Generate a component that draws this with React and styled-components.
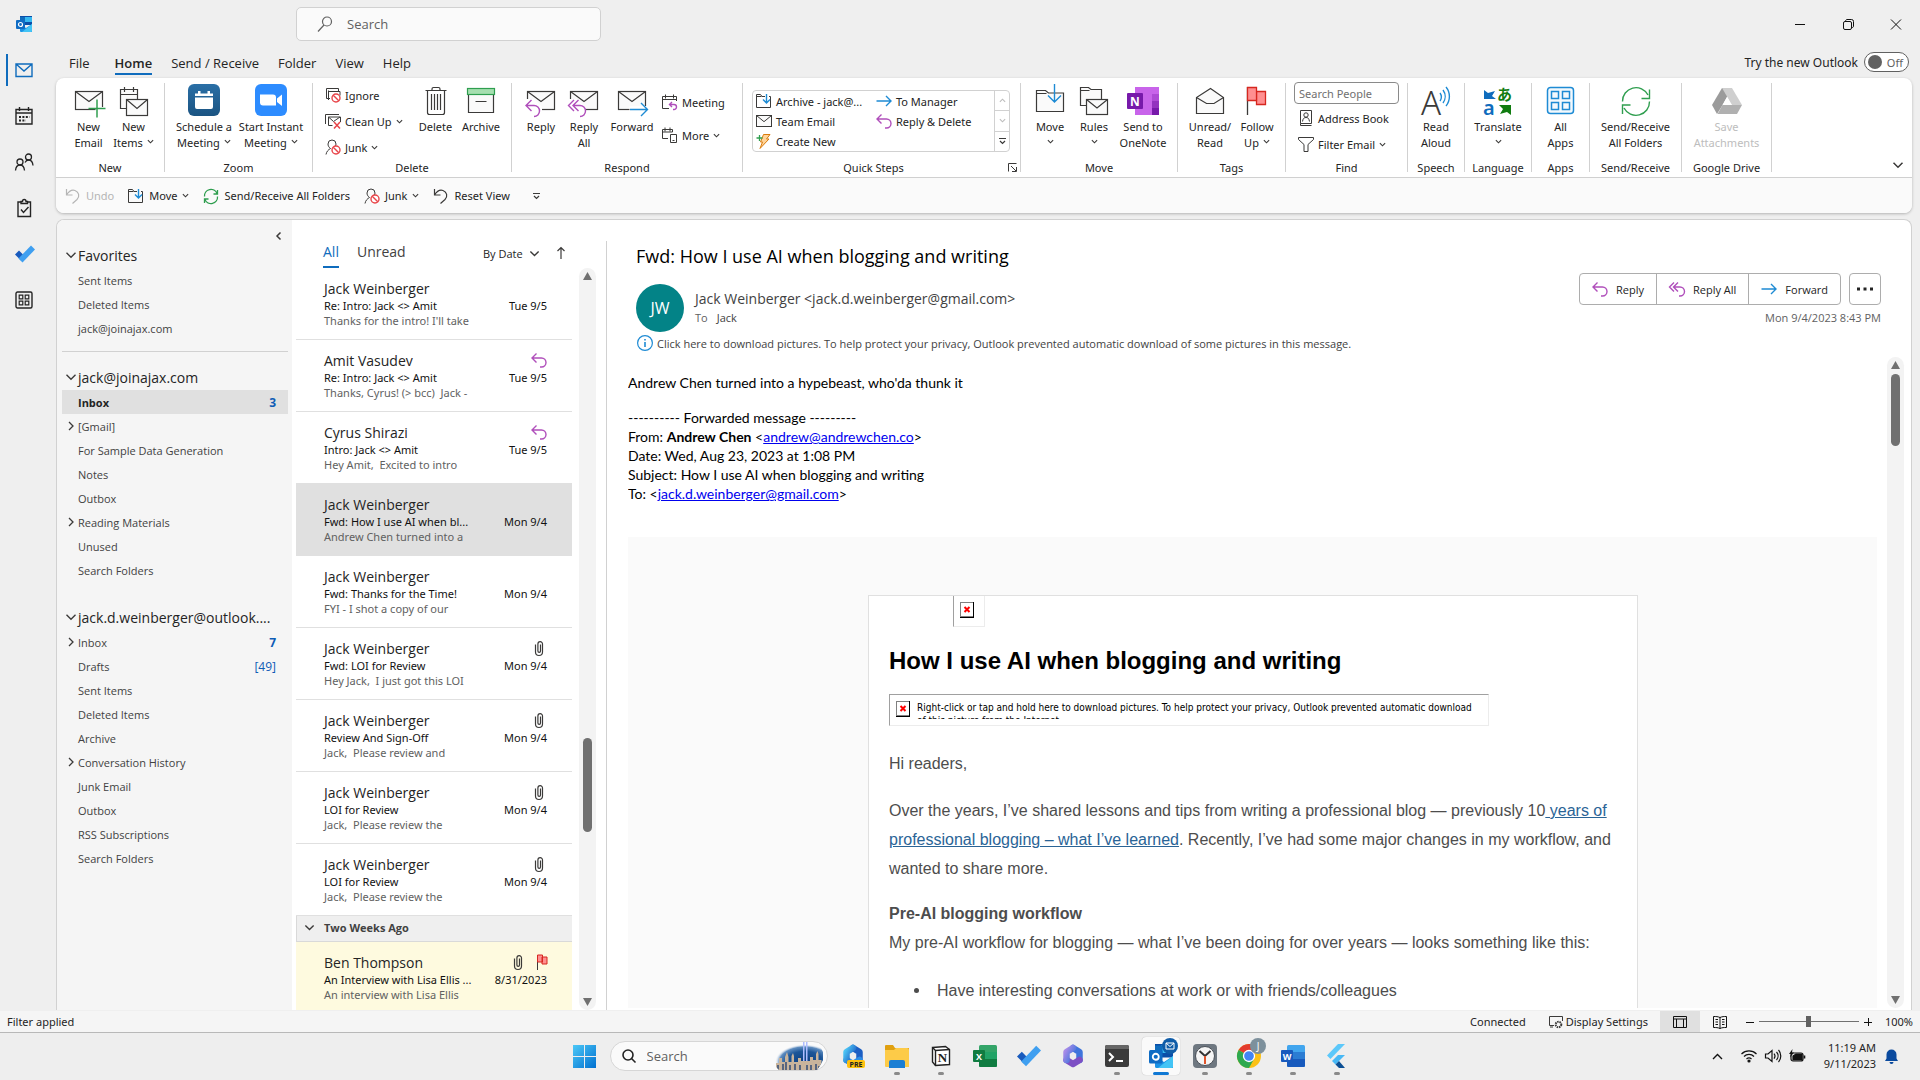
import React from "react";
import styled, { createGlobalStyle, css } from "styled-components";

const UI = '"Open Sans", "Noto Sans", sans-serif';
const RIB = '"Noto Sans", "Open Sans", sans-serif';
const INK = "#3b3a39";
const BLUE = "#1e8bd4";
const PURPLE = "#b04fbb";
const GREEN = "#2f9e4f";
const RED = "#e8454a";

const Global = createGlobalStyle`
  *, *::before, *::after { box-sizing: border-box; }
  body { margin: 0; font-family: ${UI}; font-size: 11px; color: #242424; background: #efefef; }
  button, input, select { font: inherit; color: inherit; }
  button { background: none; border: 0; padding: 0; cursor: default; }
  ul { list-style: none; margin: 0; padding: 0; }
  h1, h2, h3, p { margin: 0; }
  svg { display: block; flex: none; overflow: visible; }
`;

/* ---------- icons ---------- */

const Svg = ({ s = 16, w, h, vb, c = INK, sw = 1, children }) => (
  <svg
    width={w || s}
    height={h || s}
    viewBox={vb || `0 0 ${w || s} ${h || s}`}
    fill="none"
    stroke={c}
    strokeWidth={sw}
    aria-hidden="true"
  >
    {children}
  </svg>
);

const Chevron = ({ c = INK, s = 7, sw = 1.3 }) => (
  <Svg s={s} vb="0 0 8 8" c={c} sw={sw}><path d="M1 2.5 4 5.5 7 2.5" /></Svg>
);

const Mail = ({ x, y, w, h }) => (
  <g>
    <rect x={x} y={y} width={w} height={h} fill="#fafafa" />
    <path d={`M${x} ${y} L${x + w / 2} ${y + h * 0.56} L${x + w} ${y}`} />
  </g>
);

const Ban = ({ x, y, r = 4 }) => (
  <g stroke={RED} strokeWidth="1.4">
    <circle cx={x} cy={y} r={r} fill="#fff" />
    <path d={`M${x - r * 0.7} ${y - r * 0.7} L${x + r * 0.7} ${y + r * 0.7}`} />
  </g>
);

const BackArrow = () => (
  <path stroke={PURPLE} strokeWidth="1.4" d="M6.5 16 L1 21.5 L6.5 27 M1 21.5 H9 a5.5 5.5 0 0 1 0 11" />
);

const big = {
  newMail: <Svg s={32} sw={1.2}><Mail x={2.5} y={7.5} w={27} h={18} /><path d="M22.500 15h9v14h-9z" fill="#fff" stroke="none" /><path d="M24 15.5v18M15.500 24.500h17" stroke={GREEN} strokeWidth="1.5" /><path d="M29.500 15v8" /></Svg>,
  newItems: (
    <Svg s={32} sw={1.2}>
      <path d="M2.5 5.500h17v19h-17zM2.500 10.500h17M6.500 3v5M15.500 3v5" fill="#fafafa" />
      <Mail x={8.5} y={15.5} w={21} h={16} />
    </Svg>
  ),
  schedule: (
    <Svg s={32} c="none">
      <defs><linearGradient id="sch" x2="0" y2="1"><stop stopColor="#2a6fa6" /><stop offset="1" stopColor="#1b5482" /></linearGradient></defs>
      <rect width="32" height="32" rx="6" fill="url(#sch)" />
      <path fill="#fff" d="M7 12V9.500h3V7h2.500v2.500h7V7H22v2.500h3V12zM7 13.500h18V23a2 2 0 0 1-2 2H9a2 2 0 0 1-2-2z" />
    </Svg>
  ),
  instant: (
    <Svg s={32} c="none">
      <rect width="32" height="32" rx="6" fill="#2d8cff" />
      <path fill="#fff" d="M5 10.500h13a3 3 0 0 1 3 3v8H8a3 3 0 0 1-3-3zM22 14.500l5-4v11.500l-5-4z" />
    </Svg>
  ),
  trash: (
    <Svg s={32} sw={1.2}>
      <path d="M5.500 6.500h21M12 6.500V5a1.500 1.500 0 0 1 1.500-1.500h5A1.500 1.500 0 0 1 20 5v1.500M7.500 6.500v22a2 2 0 0 0 2 2h13a2 2 0 0 0 2-2v-22" />
      <path d="M11.500 10v16M14.500 10v16M17.500 10v16M20.500 10v16" />
    </Svg>
  ),
  archive: (
    <Svg s={32} sw={1.2}>
      <path d="M3.500 10.500h25v18h-25z" fill="#fafafa" />
      <rect x="2.500" y="4.500" width="27" height="6" fill="#a6dfb0" stroke={GREEN} />
      <path d="M10.500 17.500h11" />
    </Svg>
  ),
  reply: <Svg s={32} sw={1.2}><Mail x={2.5} y={7.5} w={27} h={18} /><path d="M0 15h9l8 8v11H0z" fill="#fff" stroke="none" /><BackArrow /></Svg>,
  replyAll: (
    <Svg s={32} sw={1.2}>
      <Mail x={2.5} y={7.5} w={27} h={18} /><path d="M0 15h9l8 8v11H0z" fill="#fff" stroke="none" />
      <path stroke={PURPLE} strokeWidth="1.4" d="M6 16 L.5 21.500 L6 27 M10.500 16 L5 21.500 L10.500 27 M5 21.500 H12 a5.500 5.500 0 0 1 0 11" />
    </Svg>
  ),
  forward: <Svg s={32} sw={1.2}><Mail x={2.5} y={7.5} w={27} h={18} /><path d="M13.500 22h20v5h-20z" fill="#fff" stroke="none" /><path d="M14 25.500h17.500M25 19l6.500 6.500L25 32" stroke={BLUE} strokeWidth="1.4" /></Svg>,
  move: (
    <Svg s={32} sw={1.2}>
      <path d="M2.500 27.500v-21h9l3 2.500h15v18.500zM2.500 9.500h10" fill="#fafafa" />
      <path d="M20.500 0v18M14 11.500l6.500 6.500 6.500-6.500" stroke={BLUE} strokeWidth="1.400" />
    </Svg>
  ),
  rules: (
    <Svg s={32} sw={1.2}>
      <path d="M2.500 21.500v-18h8l2.500 2h10.500v16zM2.500 6.500h9" fill="#fafafa" />
      <Mail x={8.5} y={15.5} w={21} h={15} />
    </Svg>
  ),
  onenote: (
    <Svg s={32} c="none">
      <rect x="8" y="3" width="24" height="28" fill="#c864ea" />
      <rect x="25" y="10" width="7" height="7" fill="#ae4bd5" /><rect x="25" y="17" width="7" height="7" fill="#9332bf" /><rect x="25" y="24" width="7" height="7" fill="#7719aa" />
      <rect x="0" y="9" width="16" height="16" rx="1" fill="#7719aa" />
      <text x="8" y="21.500" textAnchor="middle" fontSize="12" fontWeight="700" fill="#fff">N</text>
    </Svg>
  ),
  unread: <Svg s={32} sw={1.2}><path d="M2.500 29.500v-16L16.500 4.500l13 9v16z" fill="#fafafa" /><path d="M2.500 13.500l10 6h7.500l9.500-6" /></Svg>,
  flag: (
    <Svg s={32} sw={1.300}>
      <path d="M6.500 3v28" />
      <path d="M15.500 7.500h9v13h-9z" fill="#ff8f90" stroke="#d6271f" /><path d="M6.500 3.500h9v13h-9z" fill="#ff8f90" stroke="#d6271f" />
    </Svg>
  ),
  aloud: (
    <Svg s={32} sw={1.400} c={BLUE}>
      <text x="1" y="31" fontSize="33" fontWeight="300" fill={INK} stroke="none">A</text>
      <path d="M20 9a7 7 0 0 1 0 8M23 6a11 11 0 0 1 0 13M26 3a15 15 0 0 1 0 19" />
    </Svg>
  ),
  translate: (
    <Svg s={32} c="none">
      <path fill="#0f6cbd" d="M2 6l4 3 7-2-3 5 4 3H2z" />
      <path fill="#107c10" d="M29 31l-4-3-7 2 3-5-4-4h12z" />
      <text x="15" y="16" fontSize="15" fontWeight="700" fill="#107c10" fontFamily='"Noto Sans CJK JP"'>あ</text>
      <text x="1" y="31" fontSize="20" fontWeight="600" fill="#0f6cbd">a</text>
    </Svg>
  ),
  apps: (
    <Svg s={32} c={BLUE} sw={1.500}>
      <rect x="2.500" y="3.500" width="26" height="26" rx="3" fill="#f3f9fd" />
      <path d="M6.500 7.500h7v7h-7zM17.500 7.500h7v7h-7zM6.500 18.500h7v7h-7zM17.500 18.500h7v7h-7z" />
    </Svg>
  ),
  sync: (
    <Svg s={32} c={GREEN} sw={1.400}>
      <path d="M2.500 17.500A13.500 13.500 0 0 1 28 11M29.500 5.500v9h-8M29.500 17.500A13.500 13.500 0 0 1 4 24M2.500 30v-9h8" />
    </Svg>
  ),
  drive: (
    <Svg s={32} c="none">
      <path fill="#9b9b9b" d="M11 4h10l-5 9-5 9-5 8-5-9z" /><path fill="#cfcfcf" d="M11 4h10l10 17H21z" /><path fill="#b0b0b0" d="M6.500 30l5-9H31l-5 9z" /><path fill="#fff" d="M16 13l4.500 8h-9z" />
    </Svg>
  ),
};

const sm = {
  ignore: <Svg s={16}><path d="M13.500 5V1.500h-12v10H5M4 4.500h11v4M3.500 13V3.500" /><Ban x={11} y={11} r={4} /></Svg>,
  cleanup: <Svg s={16}><path d="M14 1.500H.5V11M3.500 12.500v-8.500h12v5M3.500 4l5 4.500L15 4M3.500 12.500h4" /><path d="M9 9l6 6.500M15 9l-6 6.500" stroke={RED} strokeWidth="1.500" /></Svg>,
  junk: <Svg s={16}><path d="M1 15.500c.5-3 2.500-5 4.500-6C3.500 8 3 6.500 3 5a4 4 0 0 1 8 0c0 .8-.3 1.500-.6 2" /><Ban x={11} y={11} r={4} /></Svg>,
  meeting: <Svg s={16}><path d="M7 14.500H.5v-12h14V7M.5 5.500h14M3.500.500v4M11.500.500v4" /><path d="M10 8l-2.500 2.500L10 13M7.500 10.500h4.500a2.500 2.500 0 0 1 0 5h-1" stroke={PURPLE} strokeWidth="1.400" /></Svg>,
  more: <Svg s={16}><path d="M6 11.500H.5v-9h10V5M.5 5h10M3 .500v4M8 .500v4M8.500 7.500h6v8h-6zM10.500 13.500h2" /></Svg>,
  move: <Svg s={16}><path d="M6 14.500H.5v-13h4l1.500 2h3M.5 3.500h5M13 3.500h1.500v11H6" /><path d="M10.500 1v9M7 6.500l3.500 3.500L14 6.500" stroke={BLUE} strokeWidth="1.400" /></Svg>,
  mail: <Svg s={16}><Mail x={0.5} y={2.5} w={15} h={11} /></Svg>,
  bolt: <Svg s={16} c="#d97b0c"><path d="M7.500 1.500H14L10.500 6H13L4 15.500 6.500 9H4.500z" fill="#ffd49a" /><path d="M.5 5h6M3.500 2v6" stroke={GREEN} strokeWidth="1.300" /></Svg>,
  right: <Svg s={16} c={BLUE} sw={1.400}><path d="M.5 8h14M10 3l5 5-5 5" /></Svg>,
  reply: <Svg s={16} c={PURPLE} sw={1.400}><path d="M5.500 1.500L1 6l4.500 4.500M1 6h9.500a4.500 4.500 0 0 1 0 9H9" /></Svg>,
  replyAll: <Svg s={16} c={PURPLE} sw={1.400}><path d="M5 1.500L.5 6 5 10.500M9 1.500L4.500 6 9 10.500M4.500 6H11a4.500 4.500 0 0 1 0 9h-1" /></Svg>,
  book: <Svg s={16}><path d="M2.500.500h11v13h-11zM2.500 13.500v2h11" /><circle cx="8" cy="5" r="2.200" /><path d="M4.500 11.500c.5-3 1.500-4 3.500-4s3 1 3.500 4" /></Svg>,
  filter: <Svg s={16}><path d="M.500 1.500h15v2l-5.500 5v7h-4v-7l-5.500-5z" /></Svg>,
  sync: <Svg s={16} c={GREEN} sw={1.300}><path d="M1.500 8.500A6.500 6.500 0 0 1 14 5.500M14.500 2v4h-4M14.500 8.500A6.500 6.500 0 0 1 2 11.500M1.500 15v-4h4" /></Svg>,
  undo: <Svg s={16} sw={1.200}><path d="M1.500 1v6h6M1.500 7C4 3 7 1.500 10 2.500c4 1.500 5 6 2 9L7.500 15.500" /></Svg>,
  undoOff: <Svg s={16} sw={1.200} c="#b5b5b5"><path d="M1.500 1v6h6M1.500 7C4 3 7 1.500 10 2.500c4 1.500 5 6 2 9L7.500 15.500" /></Svg>,
  clip: <Svg w={8} h={16} sw={1.200}><path d="M5.500 4.500v6.500a1.300 1.300 0 0 1-2.600 0V4a2.200 2.200 0 0 1 4.600 0v8a3.500 3.500 0 0 1-7 0V4.500" /></Svg>,
  flag: <Svg w={11} h={16}><path d="M1.500 1v15" /><path d="M6 3h5v7H6zM1.500 1h5v7h-5z" fill="#ff8f90" stroke="#d6271f" /></Svg>,
  customize: <Svg s={8} sw={1.200}><path d="M1 1.500h7M2 4l2.500 2.500L7 4" /></Svg>,
  info: <Svg s={16} c={BLUE} sw={1.200}><circle cx="8" cy="8" r="7.400" /><path d="M8 7v5M8 4v1.600" strokeWidth="1.600" /></Svg>,
  up: <Svg s={14} sw={1.200}><path d="M7 13V1.500M3.500 5L7 1.500 10.500 5" /></Svg>,
};

const OutlookLogo = ({ s = 16 }) => (
  <Svg s={s} vb="0 0 16 16" c="none">
    <rect x="4" y="0" width="12" height="9" fill="#0a4ea8" /><rect x="8" y="1" width="8" height="5" fill="#35b8f1" /><rect x="4" y="1" width="5" height="5" fill="#0f6cbd" />
    <path d="M4 8l6 4 6-4v8H5a1 1 0 0 1-1-1z" fill="#1a93e6" /><path d="M16 8v7a1 1 0 0 1-1 1H6z" fill="#43c4f5" />
    <rect x="0" y="4" width="9" height="9" rx="1" fill="#0f6cc4" />
    <circle cx="4.500" cy="8.500" r="2" stroke="#fff" strokeWidth="1.200" />
  </Svg>
);

const TodoLogo = ({ s = 20 }) => (
  <Svg s={s} vb="0 0 20 20" c="none">
    <path d="M0 10.500L4 6.500l6 6-4 4z" fill="#185abd" /><path d="M3.500 14.500L16 1.500 20 5.500 7.500 18.500z" fill="#3f9ff0" />
  </Svg>
);

const rail = [
  ["Mail", <Svg w={18} h={18} c="#0f6cbd" sw={1.400}><path d="M1 3h16v12.500H1zM1 3l8 7 8-7" /></Svg>],
  ["Calendar", <Svg s={18} sw={1.400} c="#242424"><path d="M1 2.500h16v14.500H1zM1 6h16M4.500 0v4M13.500 0v4" /><path d="M4 10h10.500M4 13.500h7" strokeWidth="2" strokeDasharray="2 1.400" /></Svg>],
  ["People", <Svg s={18} sw={1.300} c="#242424"><circle cx="5" cy="9" r="3" /><path d="M0.500 17.500c.3-3.500 2-5.500 4.500-5.500s4.200 2 4.500 5.500" /><circle cx="13.500" cy="4" r="3" /><path d="M10 9.500c.8-1.500 2-2.500 3.500-2.500 2.500 0 4.200 2 4.500 5.500" /></Svg>],
  ["Tasks", <Svg s={18} sw={1.400} c="#242424"><path d="M5.500 3H3v14.500h12.500V3H13M6 4.500V2.500h1.500C7.500 1 8 .500 9.200.500S11 1 11 2.500h1.500v2z" /><path d="M6 10.500l2.500 3 5-5.500" /></Svg>],
  ["To Do", <TodoLogo />],
  ["More apps", <Svg s={18} sw={1.400} c="#242424"><rect x="1" y="1" width="16" height="16" rx="1.500" /><path d="M4.200 4.200h3.600v3.600H4.200zM10.200 4.200h3.600v3.600h-3.600zM4.200 10.200h3.600v3.600H4.200zM10.200 10.200h3.600v3.600h-3.600z" strokeWidth="1.200" /></Svg>],
];

/* ---------- frame ---------- */

const Screen = styled.div`
  height: 100vh;
  display: flex;
  flex-direction: column;
  background: #efefef;
  overflow: hidden;
`;
const Window = styled.div`
  flex: 1;
  min-height: 0;
  display: flex;
`;
const Rail = styled.nav`
  width: 56px;
  flex: none;
  display: flex;
  flex-direction: column;
  align-items: flex-start;
`;
const RailLogo = styled.div`
  height: 47px;
  padding: 16px 0 0 16px;
`;
const RailButton = styled.button`
  width: 42px;
  height: 32px;
  margin: 7px 0 7px 6px;
  padding-left: 7px;
  display: flex;
  align-items: center;
  border-left: 2px solid ${(p) => (p.$on ? "#0f6cbd" : "transparent")};
`;
const Column = styled.div`
  flex: 1;
  min-width: 0;
  display: flex;
  flex-direction: column;
  padding-right: 8px;
`;
const TitleBar = styled.header`
  height: 48px;
  display: flex;
  justify-content: space-between;
  padding: 7px 0 0 240px;
`;
const SearchBox = styled.label`
  width: 305px;
  height: 34px;
  display: flex;
  align-items: center;
  gap: 14px;
  padding: 0 20px;
  border: 1px solid #d1d1d1;
  border-radius: 5px;
  background: #fafafa;
`;
const PlainInput = styled.input`
  flex: 1;
  min-width: 0;
  border: 0;
  padding: 0;
  background: none;
  outline: none;
  font-size: ${(p) => p.$size || 13}px;
  &::placeholder { color: #616161; opacity: 1; }
`;
const WinControls = styled.div`
  display: flex;
  align-items: flex-start;
  gap: 36px;
  padding: 11px 10px 0 0;
`;
const TabRow = styled.div`
  height: 30px;
  display: flex;
  justify-content: space-between;
  padding: 4px 3px 0 13px;
`;
const Tabs = styled.nav`
  display: flex;
  gap: 19px;
`;
const Tab = styled.button`
  height: 23px;
  font-size: 13px;
  line-height: 22px;
  font-weight: ${(p) => (p.$on ? 600 : 400)};
  border-bottom: 2px solid ${(p) => (p.$on ? "#0f6cbd" : "transparent")};
  &:first-child { margin-right: 6px; }
`;
const TryNew = styled.label`
  height: 20px;
  display: flex;
  align-items: center;
  gap: 6px;
  font-size: 12px;
  font-family: ${RIB};
`;
const Toggle = styled.span`
  width: 45px;
  height: 20px;
  display: flex;
  align-items: center;
  justify-content: space-between;
  padding: 0 5px 0 3px;
  border: 1px solid #616161;
  border-radius: 10px;
  background: #fff;
  font-size: 11px;
  color: #616161;
  input {
    appearance: none;
    width: 14px;
    height: 14px;
    margin: 0;
    border-radius: 7px;
    background: #616161;
  }
`;

/* ---------- ribbon ---------- */

const Ribbon = styled.section`
  border-radius: 8px;
  background: #fff;
  box-shadow: 0 1px 3px rgba(0, 0, 0, 0.25);
  font-family: ${RIB};
  overflow: hidden;
  flex: none;
`;
const Groups = styled.div`
  display: flex;
  height: 100px;
  padding-top: 4px;
  border-bottom: 1px solid #d0d0d0;
`;
const GroupBox = styled.div`
  width: ${(p) => p.$w}px;
  flex: none;
  display: flex;
  flex-direction: column;
  position: relative;
`;
const GroupBody = styled.div`
  height: 78px;
  display: flex;
  padding-left: ${(p) => p.$pad || 0}px;
  justify-content: ${(p) => (p.$pad ? "flex-start" : "center")};
`;
const GroupLabel = styled.div`
  line-height: 16px;
  font-size: 11px;
  text-align: center;
  padding-right: ${(p) => (p.$launcher ? 16 : 0)}px;
`;
const Divider = styled.span`
  width: 1px;
  height: 89px;
  margin-top: 1px;
  flex: none;
  background: #d1d1d1;
`;
const Launcher = styled.button`
  position: absolute;
  right: 3px;
  bottom: 5px;
`;
const BigBtn = styled.button`
  width: ${(p) => p.$w}px;
  display: flex;
  flex-direction: column;
  align-items: center;
  padding-top: 2px;
  line-height: 16px;
  white-space: nowrap;
  color: ${(p) => (p.disabled ? "#bdbdbd" : "#242424")};
  svg:first-child { margin-bottom: 3px; }
`;
const Line = styled.span`
  height: 16px;
  display: flex;
  align-items: center;
  gap: 4px;
`;
const SmallCol = styled.div`
  width: ${(p) => p.$w}px;
  display: flex;
  flex-direction: column;
  gap: ${(p) => p.$gap || 0}px;
  padding-top: ${(p) => p.$gap || 0}px;
`;
const SmallBtn = styled.button`
  height: 26px;
  display: flex;
  align-items: center;
  gap: 4px;
  padding-left: 4px;
  white-space: nowrap;
`;
const PeopleInput = styled.input`
  width: 105px;
  height: 22px;
  margin-bottom: 1px;
  padding: 0 4px;
  border: 1px solid #8a8a8a;
  border-radius: 4px;
  background: #fff;
  &::placeholder { color: #707070; opacity: 1; }
`;
const Steps = styled.div`
  width: 258px;
  height: 62px;
  margin-top: 8px;
  display: grid;
  grid-template-columns: 120px 1fr 15px;
  border: 1px solid #d1d1d1;
  border-radius: 4px;
`;
const StepCol = styled.div`
  display: flex;
  flex-direction: column;
  button { height: 20px; gap: 4px; padding-left: 3px; }
`;
const StepScroll = styled.div`
  display: flex;
  flex-direction: column;
  border-left: 1px solid #d1d1d1;
  button {
    flex: 1;
    display: flex;
    align-items: center;
    justify-content: center;
  }
  button + button { border-top: 1px solid #d1d1d1; }
`;
const Collapse = styled.button`
  margin: auto 8px 6px auto;
`;
const Quick = styled.div`
  height: 35px;
  display: flex;
  align-items: center;
  gap: 14px;
  padding: 0 9px;
  background: #fafafa;
`;
const QuickBtn = styled.button`
  display: flex;
  align-items: center;
  gap: 5px;
  white-space: nowrap;
  color: ${(p) => (p.disabled ? "#b5b5b5" : "#242424")};
  &:last-child { margin-left: 8px; }
`;

const Big = ({ icon, a, b, w, drop, disabled }) => (
  <BigBtn $w={w} disabled={disabled}>
    {big[icon]}
    <Line>{a}</Line>
    {(b || drop) && <Line>{b}{drop && <Chevron />}</Line>}
  </BigBtn>
);
const Small = ({ icon, children, drop }) => (
  <SmallBtn>{sm[icon]}{children}{drop && <Chevron />}</SmallBtn>
);
const Group = ({ label, w, pad, children, launcher }) => (
  <>
    <GroupBox $w={w}>
      <GroupBody $pad={pad}>{children}</GroupBody>
      <GroupLabel $launcher={launcher}>{label}</GroupLabel>
      {launcher && (
        <Launcher aria-label="Manage quick steps">
          <Svg s={9}><path d="M8.500.500h-8v8M3 3l5 5M8.500 4v4.500H4" /></Svg>
        </Launcher>
      )}
    </GroupBox>
    <Divider />
  </>
);

const RibbonBar = () => (
  <Ribbon>
    <Groups>
      <Group label="New" w={108} pad={10}>
        <Big icon="newMail" a="New" b="Email" w={45} />
        <Big icon="newItems" a="New" b="Items" w={45} drop />
      </Group>
      <Group label="Zoom" w={147} pad={5}>
        <Big icon="schedule" a="Schedule a" b="Meeting" w={68} drop />
        <Big icon="instant" a="Start Instant" b="Meeting" w={66} drop />
      </Group>
      <Group label="Delete" w={198} pad={8}>
        <SmallCol $w={94}>
          <Small icon="ignore">Ignore</Small>
          <Small icon="cleanup" drop>Clean Up</Small>
          <Small icon="junk" drop>Junk</Small>
        </SmallCol>
        <Big icon="trash" a="Delete" w={41} />
        <Big icon="archive" a="Archive" w={50} />
      </Group>
      <Group label="Respond" w={230} pad={8}>
        <Big icon="reply" a="Reply" w={42} />
        <Big icon="replyAll" a="Reply" b="All" w={44} />
        <Big icon="forward" a="Forward" w={52} />
        <SmallCol $w={80} $gap={7}>
          <Small icon="meeting">Meeting</Small>
          <Small icon="more" drop>More</Small>
        </SmallCol>
      </Group>
      <Group label="Quick Steps" w={277} pad={9} launcher>
        <Steps>
          <StepCol>
            <Small icon="move">Archive - jack@...</Small>
            <Small icon="mail">Team Email</Small>
            <Small icon="bolt">Create New</Small>
          </StepCol>
          <StepCol>
            <Small icon="right">To Manager</Small>
            <Small icon="reply">Reply &amp; Delete</Small>
          </StepCol>
          <StepScroll>
            <button aria-label="Previous steps"><Svg s={7} vb="0 0 8 8" c="#bdbdbd" sw={1.300}><path d="M1 5.500 4 2.500 7 5.500" /></Svg></button>
            <button aria-label="Next steps"><Chevron c="#bdbdbd" /></button>
            <button aria-label="All steps">{sm.customize}</button>
          </StepScroll>
        </Steps>
      </Group>
      <Group label="Move" w={156} pad={6}>
        <Big icon="move" a="Move" w={46} drop />
        <Big icon="rules" a="Rules" w={42} drop />
        <Big icon="onenote" a="Send to" b="OneNote" w={56} />
      </Group>
      <Group label="Tags" w={107} pad={6}>
        <Big icon="unread" a="Unread/" b="Read" w={52} />
        <Big icon="flag" a="Follow" b="Up" w={42} drop />
      </Group>
      <Group label="Find" w={121} pad={8}>
        <SmallCol $w={105}>
          <PeopleInput aria-label="Search People" placeholder="Search People" />
          <Small icon="book">Address Book</Small>
          <Small icon="filter" drop>Filter Email</Small>
        </SmallCol>
      </Group>
      <Group label="Speech" w={56}><Big icon="aloud" a="Read" b="Aloud" w={50} /></Group>
      <Group label="Language" w={66}><Big icon="translate" a="Translate" w={60} drop /></Group>
      <Group label="Apps" w={57}><Big icon="apps" a="All" b="Apps" w={50} /></Group>
      <Group label="Send/Receive" w={91}><Big icon="sync" a="Send/Receive" b="All Folders" w={85} /></Group>
      <Group label="Google Drive" w={89}><Big icon="drive" a="Save" b="Attachments" w={80} disabled /></Group>
      <Collapse aria-label="Collapse ribbon"><Chevron s={12} sw={1} /></Collapse>
    </Groups>
    <Quick>
      <QuickBtn disabled>{sm.undoOff}Undo</QuickBtn>
      <QuickBtn>{sm.move}Move<Chevron /></QuickBtn>
      <QuickBtn>{sm.sync}Send/Receive All Folders</QuickBtn>
      <QuickBtn>{sm.junk}Junk<Chevron /></QuickBtn>
      <QuickBtn>{sm.undo}Reset View</QuickBtn>
      <QuickBtn aria-label="Customize toolbar">{sm.customize}</QuickBtn>
    </Quick>
  </Ribbon>
);

/* ---------- folders ---------- */

const Panel = styled.main`
  flex: 1;
  min-height: 0;
  margin-top: 6px;
  display: flex;
  border: 1px solid #d1d1d1;
  border-bottom: 0;
  border-radius: 8px 8px 0 0;
  background: #fff;
  overflow: hidden;
`;
const Folders = styled.nav`
  width: 235px;
  flex: none;
  padding: 0 4px 0 5px;
  background: #f5f5f5;
`;
const PaneTop = styled.div`
  height: 22px;
  display: flex;
  justify-content: flex-end;
  padding: 9px 5px 0 0;
`;
const Account = styled.button`
  width: 100%;
  height: 26px;
  display: flex;
  align-items: center;
  gap: 1px;
  padding-left: 3px;
  font-size: 14px;
  white-space: nowrap;
`;
const Rule = styled.hr`
  height: 1px;
  border: 0;
  margin: 11px 0 12px;
  background: #d1d1d1;
`;
const Gap = styled.div`
  height: 22px;
`;
const Folder = styled.button`
  width: 100%;
  height: 24px;
  display: grid;
  grid-template-columns: 11px 1fr auto;
  align-items: center;
  padding: 0 12px 0 5px;
  text-align: left;
  font-size: 11px;
  color: #424242;
  background: ${(p) => (p.$on ? "#e0e0e0" : "none")};
  ${(p) => p.$on && css`font-weight: 700; color: #242424;`}
`;
const Count = styled.span`
  font-size: 12px;
  color: #0f5cb5;
  font-weight: ${(p) => (p.$strong ? 700 : 400)};
`;

const first = [["Inbox", "3", true], ["[Gmail]", null, false, true], ["For Sample Data Generation"], ["Notes"], ["Outbox"], ["Reading Materials", null, false, true], ["Unused"], ["Search Folders"]];
const second = [["Inbox", "7", false, true], ["Drafts", "[49]"], ["Sent Items"], ["Deleted Items"], ["Archive"], ["Conversation History", null, false, true], ["Junk Email"], ["Outbox"], ["RSS Subscriptions"], ["Search Folders"]];

const FolderList = ({ items }) => (
  <ul>
    {items.map(([name, count, on, nested]) => (
      <li key={name}>
        <Folder $on={on}>
          {nested ? <Svg s={8} sw={1.300}><path d="M2 0l4 4-4 4" /></Svg> : <span />}
          <span>{name}</span>
          {count && <Count $strong={count.length === 1}>{count}</Count>}
        </Folder>
      </li>
    ))}
  </ul>
);
const Head = ({ children }) => <Account><Chevron s={12} sw={0.9} />{children}</Account>;

/* ---------- message list ---------- */

const ListPane = styled.section`
  width: 314px;
  flex: none;
  display: flex;
  flex-direction: column;
  padding: 0 10px 0 4px;
`;
const ListHead = styled.div`
  height: 48px;
  padding: 20px 28px 0 27px;
  display: flex;
`;
const FilterTab = styled.button`
  height: 28px;
  margin-right: 18px;
  padding-bottom: 4px;
  font-size: 14px;
  color: ${(p) => (p.$on ? "#0f6cbd" : "#424242")};
  border-bottom: 2px solid ${(p) => (p.$on ? "#0f6cbd" : "transparent")};
`;
const SortBy = styled.label`
  height: 26px;
  margin-left: auto;
  margin-right: 14px;
  display: flex;
  align-items: center;
  gap: 6px;
  select {
    appearance: none;
    border: 0;
    padding: 0;
    background: none;
    outline: none;
  }
`;
const SortDir = styled.button`
  height: 26px;
`;
const ListBody = styled.div`
  flex: 1;
  min-height: 0;
  display: flex;
  justify-content: space-between;
`;
const Rows = styled.ul`
  width: 276px;
  overflow: hidden;
`;
const Row = styled.li`
  height: 72px;
  padding: 10px 25px 0 28px;
  display: grid;
  grid-template-columns: 1fr auto;
  grid-template-rows: 20px 14px 16px;
  align-items: center;
  border-bottom: 1px solid #e0e0e0;
  background: ${(p) => (p.$tone === "selected" ? "#e0e0e0" : p.$tone === "flagged" ? "#fefadf" : "#fff")};
  white-space: nowrap;
`;
const From = styled.span`
  font-size: 14px;
`;
const Marks = styled.span`
  display: flex;
  gap: 14px;
  justify-content: flex-end;
  padding-right: ${(p) => (p.$inset ? 4 : 0)}px;
`;
const Subject = styled.span`
  font-family: ${RIB};
  font-size: 11px;
  color: #111;
`;
const Preview = styled.span`
  grid-column: 1 / -1;
  font-family: ${RIB};
  font-size: 11px;
  color: #616161;
  white-space: pre;
`;
const GroupRow = styled.li`
  height: 26px;
  display: flex;
  align-items: center;
  gap: 9px;
  padding: 0 0 2px 7px;
  border: 1px solid #d9d9d9;
  border-width: 0 0 1px 1px;
  background: #efefef;
  font-weight: 700;
  color: #424242;
`;

const mails = [
  ["Jack Weinberger", "Re: Intro: Jack <> Amit", "Thanks for the intro! I'll take", "Tue 9/5"],
  ["Amit Vasudev", "Re: Intro: Jack <> Amit", "Thanks, Cyrus! (> bcc)  Jack -", "Tue 9/5", ["reply"]],
  ["Cyrus Shirazi", "Intro: Jack <> Amit", "Hey Amit,  Excited to intro", "Tue 9/5", ["reply"]],
  ["Jack Weinberger", "Fwd: How I use AI when bl...", "Andrew Chen turned into a", "Mon 9/4", [], "selected"],
  ["Jack Weinberger", "Fwd: Thanks for the Time!", "FYI - I shot a copy of our", "Mon 9/4"],
  ["Jack Weinberger", "Fwd: LOI for Review", "Hey Jack,  I just got this LOI", "Mon 9/4", ["clip"]],
  ["Jack Weinberger", "Review And Sign-Off", "Jack,  Please review and", "Mon 9/4", ["clip"]],
  ["Jack Weinberger", "LOI for Review", "Jack,  Please review the", "Mon 9/4", ["clip"]],
  ["Jack Weinberger", "LOI for Review", "Jack,  Please review the", "Mon 9/4", ["clip"]],
  "Two Weeks Ago",
  ["Ben Thompson", "An Interview with Lisa Ellis ...", "An interview with Lisa Ellis", "8/31/2023", ["clip", "flag"], "flagged"],
];

const Track = styled.div`
  width: 17px;
  flex: none;
  display: flex;
  flex-direction: column;
  align-items: center;
  border-radius: 9px;
  background: #f3f3f3;
`;
const TrackBtn = styled.button`
  height: 16px;
  display: flex;
  align-items: center;
`;
const Stretch = styled.span`
  flex: ${(p) => p.$n} 1 0;
`;
const Thumb = styled(Stretch)`
  width: 9px;
  border-radius: 5px;
  background: #707070;
`;
const Scrollbar = ({ parts: [a, b, c] }) => (
  <Track>
    <TrackBtn aria-label="Scroll up"><Svg w={9} h={8} c="none"><path d="M4.500 0l4.500 8H0z" fill="#707070" /></Svg></TrackBtn>
    <Stretch $n={a} /><Thumb $n={b} /><Stretch $n={c} />
    <TrackBtn aria-label="Scroll down"><Svg w={9} h={8} c="none"><path d="M4.500 8L9 0H0z" fill="#707070" /></Svg></TrackBtn>
  </Track>
);

/* ---------- reading pane ---------- */

const Reading = styled.article`
  flex: 1;
  min-width: 0;
  margin-top: 21px;
  border-left: 1px solid #d1d1d1;
  display: flex;
  flex-direction: column;
`;
const MsgHead = styled.header`
  padding: 3px 30px 0 29px;
`;
const Title = styled.h1`
  font-size: 18px;
  font-weight: 400;
  line-height: 25px;
  color: #000;
`;
const Sender = styled.div`
  display: flex;
  margin-top: 4px;
`;
const Avatar = styled.div`
  width: 48px;
  height: 48px;
  margin: 11px 11px 0 0;
  border-radius: 50%;
  display: flex;
  align-items: center;
  justify-content: center;
  background: #038387;
  color: #fff;
  font-size: 16px;
`;
const Who = styled.div`
  flex: 1;
  padding-top: 15px;
  color: #424242;
`;
const WhoName = styled.div`
  font-size: 14px;
  line-height: 22px;
`;
const WhoTo = styled.div`
  line-height: 16px;
  display: flex;
  gap: 9px;
  span { color: #616161; }
`;
const Actions = styled.div`
  display: flex;
  flex-direction: column;
  align-items: flex-end;
  gap: 5px;
`;
const ActionRow = styled.div`
  display: flex;
  gap: 8px;
`;
const Segments = styled.div`
  display: flex;
  border: 1px solid #adadad;
  border-radius: 4px;
  button + button { border-left: 1px solid #adadad; }
`;
const Action = styled.button`
  height: 30px;
  display: flex;
  align-items: center;
  gap: 8px;
  padding: 0 12px;
`;
const MoreBtn = styled.button`
  width: 32px;
  height: 32px;
  border: 1px solid #adadad;
  border-radius: 4px;
  display: flex;
  align-items: center;
  justify-content: center;
`;
const Stamp = styled.time`
  line-height: 16px;
  color: #616161;
`;
const InfoBar = styled.button`
  display: flex;
  align-items: center;
  gap: 4px;
  margin: 3px 0 6px 1px;
  height: 16px;
  color: #424242;
`;
const MsgBody = styled.div`
  flex: 1;
  min-height: 0;
  display: flex;
  padding: 0 7px 2px 21px;
`;
const Content = styled.div`
  flex: 1;
  min-width: 0;
  margin-right: 10px;
  overflow: hidden;
`;
const Plain = styled.div`
  padding-top: 16px;
  font-family: Lato, sans-serif;
  font-size: 14px;
  line-height: 19px;
  color: #000;
  a { color: #0000ee; }
  p:first-child { margin-bottom: 16px; }
`;
const Canvas = styled.div`
  margin-top: 34px;
  padding: 58px 239px 0 240px;
  background: #fafafa;
`;
const Card = styled.div`
  height: 500px;
  padding: 0 20px;
  border: 1px solid #e0e0e0;
  background: #fff;
  font-family: "Liberation Sans", Arial, sans-serif;
  font-size: 16px;
  line-height: 29px;
  color: #4d4d4d;
  a { color: #2a6496; }
  h2 { font-size: 24px; line-height: 30px; color: #000; margin: 19px 0 18px; }
  h3 { font-size: 16px; line-height: 29px; margin-top: 16px; }
  ul { margin: 19px 0 0 25px; }
  li { display: flex; gap: 18px; align-items: center; }
  li::before { content: ""; width: 5px; height: 5px; border-radius: 50%; background: #4d4d4d; }
`;
const Blocked = styled.div`
  width: ${(p) => p.$w}px;
  height: ${(p) => p.$h}px;
  margin-left: ${(p) => p.$left || 0}px;
  display: flex;
  gap: 7px;
  padding: 6px;
  border: 1px solid #a0a0a0;
  border-right-color: #ececec;
  border-bottom-color: #ececec;
  border-top-width: ${(p) => (p.$flush ? 0 : 1)}px;
`;
const BlockedText = styled.p`
  height: 18px;
  overflow: hidden;
  font-family: "DejaVu Sans Condensed", "DejaVu Sans", sans-serif;
  font-size: 10px;
  line-height: 13px;
  color: #000;
`;
const Para = styled.p`
  margin-top: ${(p) => p.$top}px;
`;
const RedX = () => (
  <Svg w={14} h={16} c="none">
    <path d="M0 0h14v16H0z" fill="#000" /><path d="M0 0h13v15H0z" fill="#808080" /><path d="M1 1h12v13H1z" fill="#fff" />
    <path d="M4.500 5l5 5M9.500 5l-5 5" stroke="#f00" strokeWidth="2" />
  </Svg>
);

/* ---------- status bar and taskbar ---------- */

const Status = styled.footer`
  height: 22px;
  margin-top: 1px;
  flex: none;
  display: flex;
  align-items: center;
  padding: 0 7px;
  background: #f5f5f5;
  border-bottom: 1px solid #b8b8b8;
  font-family: ${RIB};
  font-size: 11px;
`;
const StatusRight = styled.div`
  margin-left: auto;
  display: flex;
  align-items: center;
  height: 21px;
`;
const StatusBtn = styled.button`
  display: flex;
  align-items: center;
  gap: 3px;
  margin: 0 12px 0 23px;
`;
const ViewBtn = styled.button`
  width: 40px;
  height: 21px;
  display: flex;
  align-items: center;
  justify-content: center;
  background: ${(p) => (p.$on ? "#e0e0e0" : "none")};
`;
const Zoom = styled.div`
  display: flex;
  align-items: center;
  gap: 5px;
  margin: 0 13px 0 6px;
  input {
    appearance: none;
    width: 100px;
    height: 12px;
    margin: 0;
    background: linear-gradient(#707070, #707070) center / 100% 1px no-repeat;
  }
  input::-webkit-slider-thumb {
    appearance: none;
    width: 5px;
    height: 11px;
    background: #616161;
  }
`;
const Taskbar = styled.footer`
  height: 47px;
  flex: none;
  display: grid;
  grid-template-columns: 1fr auto 1fr;
  align-items: center;
  padding-bottom: 1px;
  background: #eeeeee;
`;
const Dock = styled.div`
  grid-column: 2;
  display: flex;
  align-items: center;
  margin-left: 1px;
`;
const DockBtn = styled.button`
  width: 44px;
  height: 46px;
  display: flex;
  flex-direction: column;
  align-items: center;
  justify-content: center;
  position: relative;
`;
const DockTile = styled.span`
  width: 38px;
  height: 38px;
  display: flex;
  align-items: center;
  justify-content: center;
  border-radius: 4px;
  background: ${(p) => (p.$on ? "#fafafa" : "none")};
  box-shadow: ${(p) => (p.$on ? "0 0 1px rgba(0,0,0,.3)" : "none")};
`;
const Dot = styled.span`
  position: absolute;
  bottom: 4px;
  width: ${(p) => (p.$on ? 16 : 6)}px;
  height: 3px;
  border-radius: 2px;
  background: ${(p) => (p.$on ? "#0f78d4" : "#8a8a8a")};
`;
const DockSearch = styled.label`
  width: 218px;
  height: 30px;
  margin: 0 3px;
  display: flex;
  align-items: center;
  gap: 11px;
  padding: 0 4px 0 11px;
  border: 1px solid #d6d6d6;
  border-radius: 15px;
  background: #fafafa;
`;
const Tray = styled.div`
  display: flex;
  align-items: center;
  justify-content: flex-end;
  gap: 8px;
  padding-right: 21px;
  font-family: ${RIB};
`;
const TrayMore = styled.button`
  margin-right: 10px;
`;
const Clock = styled.time`
  margin-left: 11px;
  text-align: right;
  line-height: 16px;
`;

const Skyline = () => (
  <Svg w={48} h={28} c="none">
    <defs>
      <radialGradient id="sky" cx=".62" cy=".7" r=".62"><stop stopColor="#0d3f80" /><stop offset=".6" stopColor="#1d5698" /><stop offset=".85" stopColor="#5f8dc0" /><stop offset="1" stopColor="#fafafa" stopOpacity="0" /></radialGradient>
      <clipPath id="pill"><path d="M0 0h34a14 14 0 0 1 12 22l-4 6H4l-4-4z" /></clipPath>
    </defs>
    <g clipPath="url(#pill)">
      <rect width="48" height="28" fill="url(#sky)" />
      <path d="M28 0h1.500v24H28zM31 0h1.500v24H31z" fill="#aebdff" />
      <path d="M1 28v-7h3v-5h3v4h3v-5l2-5 1.500 5v5h3v-6l1.500-3 1 3v6h4v-4h3v3h9v-4h3v3h3v-6l1.500-3 1 3v6h3v5l-3 5z" fill="#c9b49c" />
      <path d="M3 28v-5M8 28v-6M11 28v-8M15 28v-5M20 28v-6M25 28v-5M32 28v-5M36 28v-5M41 28v-6M44 28v-4" stroke="#3c5278" strokeWidth="1.600" />
    </g>
  </Svg>
);

const Doc = ({ dark, mid, light, letter }) => (
  <Svg s={24} c="none">
    <rect x="6" y="1" width="18" height="22" rx="1.500" fill={light} /><path d="M6 8h18v7H6z" fill={mid} /><path d="M6 15h18v6.500a1.500 1.500 0 0 1-1.500 1.500h-15A1.500 1.500 0 0 1 6 21.500z" fill={dark} />
    <rect x="0" y="6" width="12" height="12" rx="1" fill={dark} />
    <text x="6" y="15.500" textAnchor="middle" fontSize="9" fontWeight="700" fill="#fff">{letter}</text>
  </Svg>
);
const Hex = ({ id, a, b, c, pre }) => (
  <Svg s={24} c="none">
    <defs>
      <linearGradient id={id} x1="0" y1="0" x2="1" y2="1"><stop stopColor={b} /><stop offset="1" stopColor={a} /></linearGradient>
    </defs>
    <g strokeWidth="6.500" strokeLinejoin="round">
      <path d="M12 4l6.500 4v8" stroke={a} strokeLinecap="round" />
      <path d="M18.500 16L12 20l-6.500-4" stroke={c} strokeLinecap="round" />
      <path d="M5.500 16V8L12 4" stroke={`url(#${id})`} strokeLinecap="round" />
    </g>
    {pre && <><rect x="6" y="16" width="18" height="8" rx="2" fill="#ffc20e" /><text x="15" y="22.500" textAnchor="middle" fontSize="7" fontWeight="700" fill="#222">PRE</text></>}
  </Svg>
);

const dock = [
  ["Microsoft 365 preview", <Hex id="hexPre" a="#1c5fc4" b="#4cc4f4" c="#2b8de6" pre />],
  ["File Explorer", <Svg s={24} c="none"><path d="M0 2a1 1 0 0 1 1-1h7l2 3h14v17H0z" fill="#e0a010" /><path d="M0 6h9l2-2h11a2 2 0 0 1 2 2v17H1a1 1 0 0 1-1-1z" fill="#fdcb48" /><path d="M4 24v-6a2 2 0 0 1 2-2h12a2 2 0 0 1 2 2v6z" fill="#1b7fd4" /></Svg>, true],
  ["Notion", <Svg s={24} c="#222" sw={1.400}><path d="M3.500 3.500l13-1 4 3v15l-14 1-3-3.500z" fill="#fff" /><path d="M3.500 3.500l3 3 14-1M6.500 6.500v15" /><text x="13.500" y="18" textAnchor="middle" fontSize="13" fontWeight="700" fill="#222" stroke="none" fontFamily="Liberation Serif">N</text></Svg>, true],
  ["Excel", <Doc dark="#107c41" mid="#21a366" light="#33a468" letter="X" />],
  ["To Do", <TodoLogo s={24} />],
  ["Microsoft 365", <Hex id="hexApp" a="#3f74dc" b="#a98be8" c="#7d4fc4" />],
  ["Terminal", <Svg s={24} c="none"><rect y="1" width="24" height="22" rx="2" fill="#3b3b3b" /><path d="M0 3a2 2 0 0 1 2-2h20a2 2 0 0 1 2 2v2H0z" fill="#666" /><path d="M4 9l4 4-4 4M11 17h7" stroke="#fff" strokeWidth="2" /></Svg>, true],
  ["Outlook", <Svg s={24} c="none"><OutlookLogo s={24} /><circle cx="21" cy="2" r="8" fill="#0f5ca8" /><path d="M17-1h8v6h-8zM17-1l4 3.500L25-1" stroke="#fff" /></Svg>, true, true],
  ["Clock", <Svg s={24} c="none"><rect width="24" height="24" rx="4" fill="#6e7780" /><circle cx="12" cy="12" r="9.500" fill="#f5f5f5" stroke="#4a5058" /><path d="M6.500 7l5.500 5 5.500-5" stroke="#333" strokeWidth="2" /><path d="M12 12v8" stroke="#e2562c" strokeWidth="2" /></Svg>, true],
  ["Chrome", <Svg s={24} c="none"><circle cx="12" cy="12" r="12" fill="#fbc116" /><path d="M12 12L1.600 6A12 12 0 0 1 22.400 6z" fill="#e33b2e" /><path d="M12 12L1.600 6A12 12 0 0 0 12 24l5-9z" fill="#2da94f" /><circle cx="12" cy="12" r="5.500" fill="#4285f4" stroke="#fff" strokeWidth="1.300" /><circle cx="21" cy="2" r="8" fill="#7d909c" /><text x="21" y="5.500" textAnchor="middle" fontSize="10" fill="#fff">J</text></Svg>, true],
  ["Word", <Doc dark="#185abd" mid="#2b7cd3" light="#41a5ee" letter="W" />, true],
  ["Flutter", <Svg s={24} c="none"><path d="M13 0h7L5.500 15 2 11.500z" fill="#5cc8fa" /><path d="M13 11h7l-6 6-3.500 3.500L7 17z" fill="#47b8f5" /><path d="M10.500 20.500L14 17l6 7h-6z" fill="#0b4f94" /></Svg>, true],
];

export default function App() {
  return (
    <Screen>
      <Global />
      <Window>
        <Rail>
          <RailLogo><OutlookLogo /></RailLogo>
          {rail.map(([name, icon], i) => (
            <RailButton key={name} $on={i === 0} aria-label={name}>{icon}</RailButton>
          ))}
        </Rail>
        <Column>
          <TitleBar>
            <SearchBox>
              <Svg s={16} c="#616161" sw={1.200}><circle cx="10" cy="5.500" r="4.500" /><path d="M7 9l-6 6.500" /></Svg>
              <PlainInput aria-label="Search" placeholder="Search" />
            </SearchBox>
            <WinControls>
              <button aria-label="Minimize"><Svg s={12} c="#111"><path d="M1 6.500h10" /></Svg></button>
              <button aria-label="Restore"><Svg s={12} c="#111"><rect x="1.500" y="3.500" width="8" height="8" rx="1.500" /><path d="M3.500 3.500c0-1 .5-2 1.500-2h4.500a2 2 0 0 1 2 2V8c0 1-.5 1.500-1.500 1.500" /></Svg></button>
              <button aria-label="Close"><Svg s={12} c="#111"><path d="M1 1.500l10 10M11 1.500l-10 10" /></Svg></button>
            </WinControls>
          </TitleBar>
          <TabRow>
            <Tabs>
              {["File", "Home", "Send / Receive", "Folder", "View", "Help"].map((t) => <Tab key={t} $on={t === "Home"}>{t}</Tab>)}
            </Tabs>
            <TryNew>Try the new Outlook<Toggle><input type="checkbox" role="switch" />Off</Toggle></TryNew>
          </TabRow>
          <RibbonBar />
          <Panel>
            <Folders>
              <PaneTop><button aria-label="Collapse folders"><Svg s={8} sw={1.500}><path d="M5.500.500L2 4l3.500 3.500" /></Svg></button></PaneTop>
              <Head>Favorites</Head>
              <FolderList items={[["Sent Items"], ["Deleted Items"], ["jack@joinajax.com"]]} />
              <Rule />
              <Head>jack@joinajax.com</Head>
              <FolderList items={first} />
              <Gap />
              <Head>jack.d.weinberger@outlook....</Head>
              <FolderList items={second} />
            </Folders>
            <ListPane>
              <ListHead>
                <FilterTab $on>All</FilterTab>
                <FilterTab>Unread</FilterTab>
                <SortBy>
                  <select aria-label="Sort messages"><option>By Date</option></select>
                  <Chevron s={11} sw={1} />
                </SortBy>
                <SortDir aria-label="Sort ascending">{sm.up}</SortDir>
              </ListHead>
              <ListBody>
                <Rows>
                  {mails.map((m, i) =>
                    typeof m === "string" ? (
                      <GroupRow key={i}><Chevron s={11} sw={1} />{m}</GroupRow>
                    ) : (
                      <Row key={i} $tone={m[5]}>
                        <From>{m[0]}</From>
                        <Marks $inset={m[4] && m[4].length === 1 && m[4][0] === "clip"}>
                          {(m[4] || []).map((k) => <React.Fragment key={k}>{sm[k]}</React.Fragment>)}
                        </Marks>
                        <Subject>{m[1]}</Subject>
                        <Subject>{m[3]}</Subject>
                        <Preview>{m[2]}</Preview>
                      </Row>
                    )
                  )}
                </Rows>
                <Scrollbar parts={[454, 94, 162]} />
              </ListBody>
            </ListPane>
            <Reading>
              <MsgHead>
                <Title>Fwd: How I use AI when blogging and writing</Title>
                <Sender>
                  <Avatar>JW</Avatar>
                  <Who>
                    <WhoName>Jack Weinberger &lt;jack.d.weinberger@gmail.com&gt;</WhoName>
                    <WhoTo><span>To</span>Jack</WhoTo>
                  </Who>
                  <Actions>
                    <ActionRow>
                      <Segments>
                        <Action>{sm.reply}Reply</Action>
                        <Action>{sm.replyAll}Reply All</Action>
                        <Action>{sm.right}Forward</Action>
                      </Segments>
                      <MoreBtn aria-label="More actions"><Svg w={16} h={4} c="none"><path d="M0 .5h3v3H0zM6.500.500h3v3h-3zM13 .500h3v3h-3z" fill="#242424" /></Svg></MoreBtn>
                    </ActionRow>
                    <Stamp>Mon 9/4/2023 8:43 PM</Stamp>
                  </Actions>
                </Sender>
                <InfoBar>{sm.info}Click here to download pictures. To help protect your privacy, Outlook prevented automatic download of some pictures in this message.</InfoBar>
              </MsgHead>
              <MsgBody>
                <Content>
                  <Plain>
                    <p>Andrew Chen turned into a hypebeast, who'da thunk it</p>
                    <p>---------- Forwarded message ---------</p>
                    <p>From: <b>Andrew Chen</b> &lt;<a href="mailto:andrew@andrewchen.co">andrew@andrewchen.co</a>&gt;</p>
                    <p>Date: Wed, Aug 23, 2023 at 1:08 PM</p>
                    <p>Subject: How I use AI when blogging and writing</p>
                    <p>To: &lt;<a href="mailto:jack.d.weinberger@gmail.com">jack.d.weinberger@gmail.com</a>&gt;</p>
                  </Plain>
                  <Canvas>
                    <Card>
                      <Blocked $w={32} $h={31} $left={64} $flush><RedX /></Blocked>
                      <h2>How I use AI when blogging and writing</h2>
                      <Blocked $w={600} $h={32}>
                        <RedX />
                        <BlockedText>Right-click or tap and hold here to download pictures. To help protect your privacy, Outlook prevented automatic download of this picture from the Internet.</BlockedText>
                      </Blocked>
                      <Para $top={23}>Hi readers,</Para>
                      <Para $top={18}>
                        Over the years, I’ve shared lessons and tips from writing a professional blog — previously 10<a href="#years"> years of professional blogging – what I’ve learned</a>. Recently, I’ve had some major changes in my workflow, and wanted to share more.
                      </Para>
                      <h3>Pre-AI blogging workflow</h3>
                      <p>My pre-AI workflow for blogging — what I’ve been doing for over years — looks something like this:</p>
                      <ul><li>Have interesting conversations at work or with friends/colleagues</li></ul>
                    </Card>
                  </Canvas>
                </Content>
                <Scrollbar parts={[1, 72, 546]} />
              </MsgBody>
            </Reading>
          </Panel>
        </Column>
      </Window>
      <Status>
        <span>Filter applied</span>
        <StatusRight>
          <span>Connected</span>
          <StatusBtn>
            <Svg s={14}><path d="M5 10.500H.5v-9h13V6M1 12h3" /><circle cx="9.500" cy="9.500" r="2.800" strokeWidth="2" strokeDasharray="1.500 .8" /></Svg>
            Display Settings
          </StatusBtn>
          <ViewBtn $on aria-label="Normal view"><Svg w={14} h={12} c="#111"><path d="M.500.500h13v11H.500zM.500 3h13M3.500 3v8.500M10.500 3v8.500" /></Svg></ViewBtn>
          <ViewBtn aria-label="Reading view"><Svg w={14} h={12} c="#111"><path d="M7 1v11.500M7 1.500C5 .500 3 .500.500.500v11c2.500 0 4.500 0 6.500 1 2-1 4-1 6.500-1v-11c-2.500 0-4.500 0-6.500 1zM2.500 3.500h2.500M2.500 6h2.500M2.500 8.500h2.500M9 3.500h2.500M9 6h2.500M9 8.500h2.500" /></Svg></ViewBtn>
          <Zoom>
            <button aria-label="Zoom out"><Svg s={8} c="#111"><path d="M0 4.500h8" /></Svg></button>
            <input type="range" min="0" max="200" defaultValue="100" aria-label="Zoom level" />
            <button aria-label="Zoom in"><Svg s={8} c="#111"><path d="M0 4.500h8M4.500 0v8" /></Svg></button>
          </Zoom>
          <span>100%</span>
        </StatusRight>
      </Status>
      <Taskbar>
        <Dock>
          <DockBtn aria-label="Start">
            <Svg s={23} c="none"><defs><linearGradient id="win" x2="1" y2="1"><stop stopColor="#4cc8f7" /><stop offset="1" stopColor="#0070d0" /></linearGradient></defs><path fill="url(#win)" d="M0 0h11v11H0zM12 0h11v11H12zM0 12h11v11H0zM12 12h11v11H12z" /></Svg>
          </DockBtn>
          <DockSearch>
            <Svg s={14} c="#222" sw={1.600}><circle cx="6" cy="6" r="5" /><path d="M9.500 9.500l4 4" /></Svg>
            <PlainInput aria-label="Search the computer" placeholder="Search" />
            <Skyline />
          </DockSearch>
          {dock.map(([name, icon, dot, on]) => (
            <DockBtn key={name} aria-label={name}>
              <DockTile $on={on}>{icon}</DockTile>
              {dot && <Dot $on={on} />}
            </DockBtn>
          ))}
        </Dock>
        <Tray>
          <TrayMore aria-label="Hidden icons"><Svg s={11} c="#111" sw={1.400}><path d="M1 8l4.500-4.500L10 8" /></Svg></TrayMore>
          <Svg s={16} c="#111" sw={1.200}><path d="M.500 6a10.500 10.500 0 0 1 15 0M3 8.500a7 7 0 0 1 10 0M5.500 11a3.600 3.600 0 0 1 5 0" /><circle cx="8" cy="13" r="1" fill="#111" /></Svg>
          <Svg s={16} c="#111" sw={1.200}><path d="M.500 6h2.500l4-3.500v11L3 10H.500zM9 5.500a4 4 0 0 1 0 5M11.500 4a6 6 0 0 1 0 8M13.500 2a9 9 0 0 1 0 12" /></Svg>
          <Svg s={16} c="#111" sw={1.200}><rect x="2" y="5" width="12" height="8" rx="2" /><path d="M4 8l3-2h6v6H4z" fill="#111" /><path d="M15.500 7.500v3" strokeWidth="1.600" /><path d="M3.500 1L0 6h2l-1 3.500L5 4.500H3z" fill="#111" stroke="none" /></Svg>
          <Clock>11:19 AM<br />9/11/2023</Clock>
          <Svg s={15} c="none"><path d="M1 12l1.500-2.500V5.500a5 5 0 0 1 10 0v4L14 12zM5.500 13h4a2 2 0 0 1-4 0z" fill="#0a4a9e" /></Svg>
        </Tray>
      </Taskbar>
    </Screen>
  );
}
